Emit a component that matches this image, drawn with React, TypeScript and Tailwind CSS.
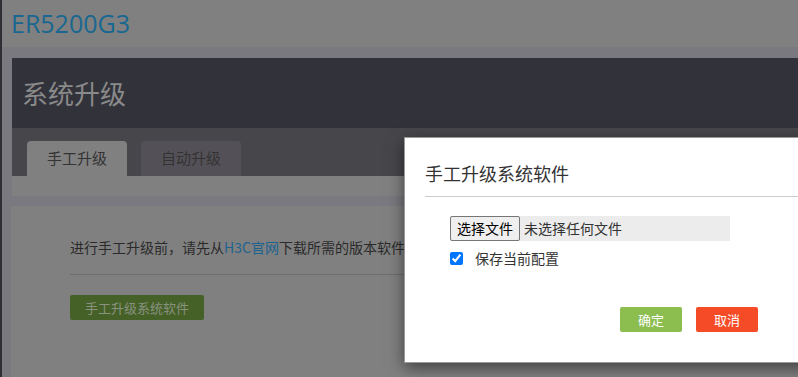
import { useState } from "react";

const CJK = "font-['Noto_Sans_CJK_SC','Noto_Sans',sans-serif]";

/** 背景页面（已被遮罩压暗，直接用压暗后的颜色）。 */
function UpgradePage() {
  return (
    <div className="flex h-full flex-1 flex-col">
      <div className="flex h-[47px] shrink-0 items-center bg-[#808080] pl-[9px]">
        <span className="font-['Open_Sans',sans-serif] text-[25px] leading-none text-[#186790]">
          ER5200G3
        </span>
      </div>

      <div className="flex flex-1 flex-col bg-[#7a797f] pt-[11px]">
        <div className="ml-[10px] flex h-[70px] items-center bg-[#32323b] pl-[10px]">
          <span className={CJK + " text-[26px] leading-none text-[#8a8a8a]"}>系统升级</span>
        </div>

        <div className="ml-[10px] flex h-[48px] items-end gap-[14px] bg-[#47464b] pl-[15px]">
          <div className="flex h-[35px] w-[100px] items-center justify-center rounded-t-[4px] bg-[#808080]">
            <span className={CJK + " text-[15px] text-[#333]"}>手工升级</span>
          </div>
          <div className="flex h-[35px] w-[100px] items-center justify-center rounded-t-[4px] bg-[#535157]">
            <span className={CJK + " text-[15px] text-[#333]"}>自动升级</span>
          </div>
        </div>
        <div className="ml-[10px] h-[20px] bg-[#808080]" />

        <div className="mt-[10px] ml-[9px] flex-1 bg-[#808080] pt-[31px] pl-[59px]">
          <p className={CJK + " text-[14px] leading-[20px] text-[#2a2a2a]"}>
            进行手工升级前，请先从<span className="text-[#1d6390]">H3C官网</span>下载所需的版本软件
          </p>
          <div className="mt-[17px] h-px w-[600px] bg-[#6e6e6e]" />
          <button
            className={
              CJK +
              " mt-[20px] h-[25px] w-[134px] rounded-[2px] bg-[#456128] text-[13px] text-[#8a917f]"
            }
          >
            手工升级系统软件
          </button>
        </div>
      </div>
    </div>
  );
}

/** 手工升级弹窗。 */
function UpgradeDialog() {
  const [keepConfig, setKeepConfig] = useState(true);

  return (
    <div className="absolute top-[137px] left-[404px] h-[226px] w-[430px] border border-black/40 bg-white shadow-[0_5px_15px_rgba(0,0,0,0.5)]">
      <div className="pt-[22px] pl-[20px]">
        <h3 className={CJK + " text-[18px] leading-[26px] text-[#333]"}>手工升级系统软件</h3>
        <div className="mt-[10px] h-px bg-[#cccccc]" />
      </div>

      <div className="pt-[19px] pl-[45px]">
        <label className="flex h-[25px] w-[280px] items-center bg-[#ececec]">
          <span
            className={
              CJK +
              " flex h-[25px] items-center rounded-[2px] border border-[#767676] bg-[#efefef] px-[6px] text-[14px] text-black"
            }
          >
            选择文件
          </span>
          <span className={CJK + " ml-[4px] text-[14px] text-[#333]"}>未选择任何文件</span>
        </label>

        <label className="mt-[9px] flex items-center gap-[12px]">
          <input
            type="checkbox"
            checked={keepConfig}
            onChange={(e) => setKeepConfig(e.target.checked)}
            className="m-0 h-[13px] w-[13px] accent-[#0075ff]"
          />
          <span className={CJK + " text-[14px] leading-[16px] text-[#333]"}>保存当前配置</span>
        </label>

        <div className="mt-[41px] flex gap-[14px] pl-[170px]">
          <button className={CJK + " h-[25px] w-[62px] rounded-[2px] bg-[#8bbd4f] text-[13px] text-white"}>
            确定
          </button>
          <button className={CJK + " h-[25px] w-[62px] rounded-[2px] bg-[#f64b27] text-[13px] text-white"}>
            取消
          </button>
        </div>
      </div>
    </div>
  );
}

export default function App() {
  return (
    <div className="relative flex h-[377px] w-[798px] overflow-hidden bg-[#7a797f]">
      <div className="w-[2px] shrink-0 bg-[#2f2f33]" />
      <UpgradePage />
      <UpgradeDialog />
    </div>
  );
}
